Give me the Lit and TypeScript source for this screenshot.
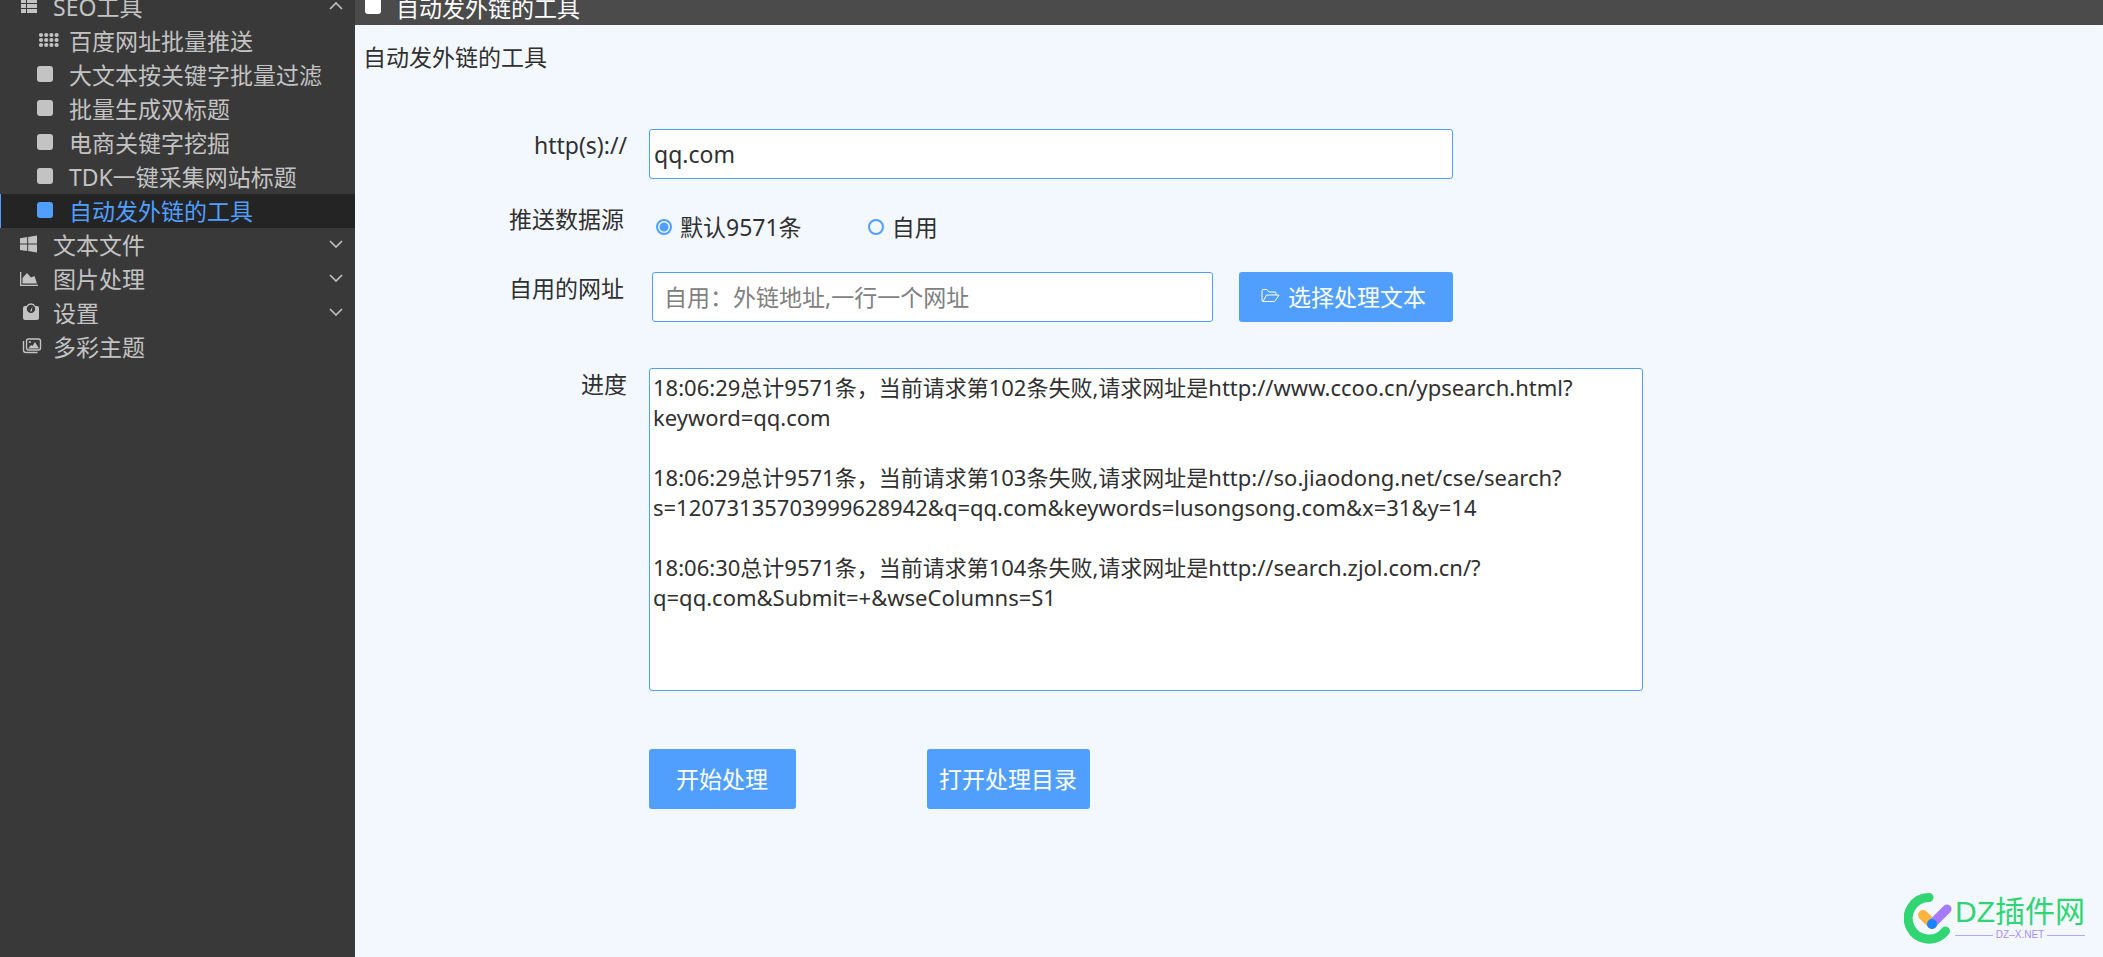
import { LitElement, html, css, svg, TemplateResult } from "lit";
import { customElement, property, state } from "lit/decorators.js";
import { classMap } from "lit/directives/class-map.js";

const icons: Record<string, TemplateResult> = {
  list: svg`<path d="M1 2h5v4H1zM7 2h10v4H7zM1 7h5v4H1zM7 7h10v4H7zM1 12h5v4H1zM7 12h10v4H7z"/>`,
  dots: svg`${[0, 1, 2].map((r) => [0, 1, 2, 3].map((c) => svg`<circle cx=${5 + c * 5.2} cy=${4 + r * 5} r="2.1"/>`))}`,
  square: svg`<rect x="1" y="1" width="16" height="16" rx="3"/>`,
  windows: svg`<path d="M0 3.2 7.2 2v6.5H0zM8.2 1.9 17 .6v7.9H8.200zM0 9.5h7.2V16L0 14.900zM8.200 9.500H17v7.900L8.200 16.100z"/>`,
  chart: svg`<path d="M0 3h1.300v12.700H18V17H0zM2.500 14.500V9L7 4l4 4.500L14.500 7l2.500 7.500z"/>`,
  scale: svg`<path transform="translate(2 0)" fill-rule="evenodd" d="M2 3h2.500a5 5 0 0 1 9 0H15q2 0 2 2v10q0 2-2 2H3q-2 0-2-2V5q0-2 2-2zM9 1.700a4.200 4.200 0 1 0 0 8.400 4.200 4.200 0 0 0 0-8.400zm1.500 1.500L9.800 8.200H8z"/>`,
  images: svg`<g transform="translate(2.500 0)"><g fill="none" stroke="currentColor" stroke-width="1.400"><rect x="4" y="2" width="14" height="11" rx="2"/><path d="M1 4v9q0 2.500 2.500 2.500H15"/></g><circle cx="7.300" cy="5" r="1.100"/><path d="M5.500 11.500 8.500 8l1.500 1 2.500-4 4 6.500z"/></g>`,
};

interface Entry {
  label: string;
  icon: string;
  sub?: boolean;
  arrow?: "up" | "down";
}

const entries: Entry[] = [
  { label: "SEO工具", icon: "list", arrow: "up" },
  { label: "百度网址批量推送", icon: "dots", sub: true },
  { label: "大文本按关键字批量过滤", icon: "square", sub: true },
  { label: "批量生成双标题", icon: "square", sub: true },
  { label: "电商关键字挖掘", icon: "square", sub: true },
  { label: "TDK一键采集网站标题", icon: "square", sub: true },
  { label: "自动发外链的工具", icon: "square", sub: true },
  { label: "文本文件", icon: "windows", arrow: "down" },
  { label: "图片处理", icon: "chart", arrow: "down" },
  { label: "设置", icon: "scale", arrow: "down" },
  { label: "多彩主题", icon: "images" },
];

const log = `18:06:29总计9571条，当前请求第102条失败,请求网址是http://www.ccoo.cn/ypsearch.html?keyword=qq.com

18:06:29总计9571条，当前请求第103条失败,请求网址是http://so.jiaodong.net/cse/search?s=12073135703999628942&q=qq.com&keywords=lusongsong.com&x=31&y=14

18:06:30总计9571条，当前请求第104条失败,请求网址是http://search.zjol.com.cn/?q=qq.com&Submit=+&wseColumns=S1`;

@customElement("side-menu")
export class SideMenu extends LitElement {
  @property() active = "";

  static styles = css`
    :host {
      display: block;
      overflow: hidden;
      background: #393939;
    }
    .menu {
      list-style: none;
      margin: -10px 0 0;
      padding: 0;
    }
    .item {
      display: flex;
      align-items: center;
      height: 34px;
      padding: 0 12px 0 19px;
      border-left: 1px solid transparent;
      color: #c3c3c3;
      font-size: 23px;
      line-height: 34px;
      text-decoration: none;
      white-space: nowrap;
    }
    .item.sub {
      padding-left: 35px;
    }
    .item.active {
      color: #509fff;
      background: #242424;
      border-left-color: #509fff;
    }
    .icon {
      flex: none;
      width: 18px;
      height: 18px;
      margin-right: 15px;
      padding-bottom: 2px;
      fill: currentColor;
      overflow: visible;
    }
    .label {
      flex: 1;
    }
    .arrow {
      width: 14px;
      height: 8px;
      padding-bottom: 2px;
      fill: none;
      stroke: currentColor;
      stroke-width: 1.6;
    }
  `;

  render() {
    return html`<nav>
      <ul class="menu">
        ${entries.map(
          (e) => html`<li>
            <a
              href="#"
              class=${classMap({ item: true, sub: !!e.sub, active: e.label === this.active })}
            >
              <svg class="icon" viewBox="0 0 18 18" aria-hidden="true">${icons[e.icon]}</svg>
              <span class="label">${e.label}</span>
              ${e.arrow
                ? html`<svg class="arrow" viewBox="0 0 14 8" aria-hidden="true">
                    <path d=${e.arrow === "up" ? "M1 7l6-6 6 6" : "M1 1l6 6 6-6"} />
                  </svg>`
                : ""}
            </a>
          </li>`
        )}
      </ul>
    </nav>`;
  }
}

@customElement("site-mark")
export class SiteMark extends LitElement {
  static styles = css`
    :host {
      display: flex;
      align-items: center;
      gap: 3px;
    }
    .logo {
      width: 48px;
      height: 52px;
    }
    .words {
      display: flex;
      flex-direction: column;
    }
    .name {
      color: #2fd573;
      font: 30px/34px "Liberation Sans", "Noto Sans CJK SC", sans-serif;
      white-space: nowrap;
    }
    .domain {
      display: flex;
      align-items: center;
      gap: 3px;
      color: #a98bff;
      font: 10px/12px "Liberation Sans", sans-serif;
    }
    .domain::before,
    .domain::after {
      content: "";
      flex: 1;
      height: 1px;
      background: #b9a2fb;
    }
  `;

  render() {
    return html`
      <svg class="logo" viewBox="0 0 48 52" fill="none" stroke-linecap="round" aria-hidden="true">
        <path d="M25 5.500A20.800 20.800 0 1 0 41.500 39" stroke="#31d572" stroke-width="9" />
        <path d="M19 23l9 9" stroke="#ffb53d" stroke-width="10" />
        <path d="M28 32l15-15" stroke="#a57bff" stroke-width="9" />
        <circle cx="28" cy="32" r="5" fill="#1685ff" />
      </svg>
      <div class="words">
        <span class="name">DZ插件网</span>
        <span class="domain">DZ–X.NET</span>
      </div>
    `;
  }
}

@customElement("app-root")
export class AppRoot extends LitElement {
  @state() private source = "default";

  static styles = css`
    * {
      box-sizing: border-box;
    }
    :host {
      display: grid;
      grid-template-columns: 355px minmax(0, 1fr);
      position: relative;
      min-height: 100vh;
      background: #f3f8ff;
      color: #303030;
      font: 23px/34px "Noto Sans", "Noto Sans CJK SC", sans-serif;
    }
    .bar {
      display: flex;
      align-items: flex-end;
      gap: 15px;
      height: 25px;
      padding-left: 10px;
      overflow: hidden;
      background: #4b4b4b;
      color: #fff;
    }
    .tab-icon {
      width: 16px;
      height: 16px;
      margin-bottom: 11px;
      border-radius: 3px;
      background: #fff;
    }
    .title {
      margin: 0;
      padding: 15px 8px 0;
      font-size: 23px;
      font-weight: 400;
    }
    .form {
      display: grid;
      grid-template-columns: 272px minmax(0, 994px);
      column-gap: 22px;
      margin-top: 55px;
      padding-right: 24px;
    }
    .label {
      line-height: 32px;
      text-align: right;
    }
    .label.inset {
      padding-right: 3px;
    }
    .field {
      width: 100%;
      max-width: 804px;
      height: 50px;
    }
    .text,
    .log {
      display: block;
      border: 1px solid #509fff;
      border-radius: 3px;
      background: #fff;
      color: #303030;
      font: inherit;
      outline: none;
    }
    .text {
      padding: 0 4px;
    }
    .radios {
      display: flex;
      gap: 66px;
      padding: 7px 7px 0;
    }
    .radio {
      display: flex;
      align-items: center;
      gap: 8px;
    }
    .dot {
      appearance: none;
      width: 16px;
      height: 16px;
      margin: 0;
      border: 2px solid #509fff;
      border-radius: 50%;
    }
    .dot:checked {
      background: radial-gradient(circle, #509fff 0 4px, transparent 5px);
    }
    .picker {
      display: flex;
      gap: 26px;
      padding-left: 3px;
    }
    .path {
      flex: 1;
      min-width: 0;
      padding: 0 11px;
    }
    .path::placeholder {
      color: #808080;
      opacity: 1;
    }
    .log {
      width: 100%;
      height: 323px;
      padding: 3px;
      resize: none;
      font-size: 22px;
      line-height: 30px;
    }
    .button {
      display: flex;
      align-items: center;
      justify-content: center;
      gap: 8px;
      border: 0;
      border-radius: 3px;
      background: #509fff;
      color: #fff;
      font: inherit;
      white-space: nowrap;
    }
    .choose {
      padding: 0 27px 0 22px;
    }
    .folder {
      width: 19px;
      height: 16px;
      margin-bottom: 2px;
    }
    .actions {
      grid-column: 2;
      display: flex;
      gap: 131px;
    }
    .action {
      min-width: 147px;
      height: 60px;
      padding: 0 13px 0 12px;
    }
    .gap-s {
      margin-top: 24px;
    }
    .gap-m {
      margin-top: 28px;
    }
    .gap-l {
      margin-top: 46px;
    }
    .gap-xl {
      margin-top: 58px;
    }
    .mark {
      position: absolute;
      right: 18px;
      bottom: 13px;
    }
  `;

  render() {
    return html`
      <side-menu active="自动发外链的工具"></side-menu>
      <main>
        <header class="bar"><span class="tab-icon"></span><span>自动发外链的工具</span></header>
        <h1 class="title">自动发外链的工具</h1>
        <form class="form" @submit=${(e: Event) => e.preventDefault()}>
          <label class="label" for="host">http(s)://</label>
          <input class="text field" id="host" type="text" value="qq.com" />

          <span class="label inset gap-s" id="source">推送数据源</span>
          <div class="radios gap-s" role="radiogroup" aria-labelledby="source">
            ${this.radio("default", "默认9571条")} ${this.radio("own", "自用")}
          </div>

          <label class="label inset gap-m" for="path">自用的网址</label>
          <div class="picker field gap-m">
            <input class="text path" id="path" type="text" placeholder="自用：外链地址,一行一个网址" />
            <button class="button choose" type="button">
              <svg class="folder" viewBox="0 0 19 16" fill="none" stroke="#fff" aria-hidden="true">
                <path
                  stroke-linejoin="round"
                  d="M2 13.500q-1 0-1-1V2.500q0-1 1-1h4l2 2.500h6q1 0 1 1V7M2 13.500 5.500 7H18l-3.500 5.500q-.500 1-1.500 1z"
                />
              </svg>
              选择处理文本
            </button>
          </div>

          <label class="label gap-l" for="log">进度</label>
          <textarea class="log gap-l" id="log" spellcheck="false" .value=${log}></textarea>

          <div class="actions gap-xl">
            <button class="button action" type="submit">开始处理</button>
            <button class="button action" type="button">打开处理目录</button>
          </div>
        </form>
      </main>
      <site-mark class="mark"></site-mark>
    `;
  }

  private radio(value: string, label: string) {
    return html`<label class="radio">
      <input
        class="dot"
        type="radio"
        name="source"
        value=${value}
        .checked=${this.source === value}
        @change=${() => (this.source = value)}
      />${label}
    </label>`;
  }
}
